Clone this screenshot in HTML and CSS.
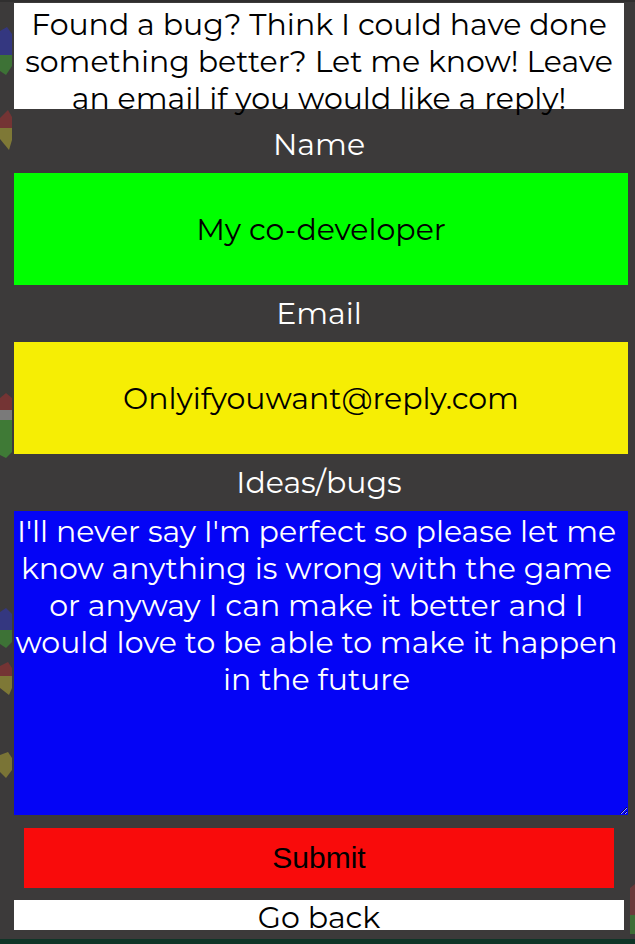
FILE: index.html
```html
<!DOCTYPE html>
<html lang="en">
<head>
<meta charset="utf-8">
<title>Feedback</title>
<link rel="stylesheet" href="styles.css">
</head>
<body>
<div class="panel">
  <svg class="decor decor-left" width="14" height="939" viewBox="0 0 14 939" aria-hidden="true">
    <polygon points="0,31 7,27 12,34 12,55 0,55" fill="#343780"/>
    <polygon points="0,55 12,55 12,66 6,75 0,71" fill="#3d7236"/>
    <polygon points="0,118 8,110 12,117 12,128 0,128" fill="#743434"/>
    <polygon points="0,128 12,128 12,140 9,150 0,139" fill="#7e7836"/>
    <polygon points="0,398 6,393 12,398 12,410 0,410" fill="#743434"/>
    <polygon points="0,410 12,410 12,420 0,420" fill="#7a7a7a"/>
    <polygon points="0,420 12,420 12,452 6,458 0,455" fill="#3f7a36"/>
    <polygon points="0,612 6,608 12,614 12,630 0,630" fill="#343780"/>
    <polygon points="0,630 12,630 12,642 6,648 0,644" fill="#3d7236"/>
    <polygon points="0,666 8,662 12,668 12,676 0,676" fill="#743434"/>
    <polygon points="0,676 12,676 12,688 9,695 0,688" fill="#7e7836"/>
    <polygon points="0,755 8,752 12,758 12,770 6,778 0,772" fill="#7a7436"/>
  </svg>
  <svg class="decor decor-right" width="7" height="939" viewBox="0 0 7 939" aria-hidden="true">
    <polygon points="2,888 7,884 7,915 2,915" fill="#6a3a3a"/>
    <polygon points="2,915 7,915 7,934 2,934" fill="#3d6e36"/>
  </svg>

  <div class="intro">Found a bug? Think I could have done something better? Let me know! Leave an email if you would like a reply!</div>

  <label class="label" for="name">Name</label>
  <input class="field field-green" id="name" type="text" value="My co-developer">

  <label class="label" for="email">Email</label>
  <input class="field field-yellow" id="email" type="text" value="Onlyifyouwant@reply.com">

  <label class="label" for="ideas">Ideas/bugs</label>
  <textarea class="ideas" id="ideas">I'll never say I'm perfect so please let me know anything is wrong with the game or anyway I can make it better and I would love to be able to make it happen in the future</textarea>

  <button class="submit" type="button">Submit</button>
  <button class="back" type="button">Go back</button>
</div>
</body>
</html>
```
FILE: styles.css
```css
html, body {
  margin: 0;
  padding: 0;
}

body {
  background: #0f3527;
  width: 635px;
  height: 944px;
  overflow: hidden;
  font-family: "Montserrat", "Open Sans", "DejaVu Sans", sans-serif;
}

.panel {
  position: relative;
  box-sizing: border-box;
  height: 939px;
  background: #3c3a3a;
  border-top: 2px solid #302f2f;
  padding: 1px 0 0 14px;
  display: flex;
  flex-direction: column;
  align-items: flex-start;
}

.decor {
  position: absolute;
  top: -2px;
  pointer-events: none;
}

.decor-left { left: 0; }
.decor-right { right: 0; }

.intro {
  box-sizing: border-box;
  width: 610px;
  height: 106px;
  background: #ffffff;
  color: #000000;
  font-size: 30px;
  line-height: 37px;
  text-align: center;
  padding-top: 3px;
  margin-bottom: 7px;
}

.label {
  width: 610px;
  height: 57px;
  display: flex;
  align-items: center;
  justify-content: center;
  color: #ffffff;
  font-size: 30px;
}

.field {
  box-sizing: border-box;
  width: 614px;
  height: 112px;
  margin: 0;
  border: none;
  outline: none;
  padding: 0;
  text-align: center;
  font-family: inherit;
  font-size: 30px;
  color: #000000;
}

.field-green { background: #00ff00; }
.field-yellow { background: #f6ee04; }

.ideas {
  box-sizing: border-box;
  display: block;
  width: 614px;
  height: 304px;
  margin: 0;
  border: none;
  outline: none;
  padding: 2px 9px 2px 0;
  background: #0404f6;
  color: #ffffff;
  font-family: inherit;
  font-size: 30px;
  line-height: 37px;
  text-align: center;
}

.submit {
  box-sizing: border-box;
  width: 590px;
  height: 60px;
  margin: 13px 0 0 10px;
  border: none;
  padding: 0;
  background: #f90b0b;
  color: #000000;
  font-family: "Liberation Sans", Arial, sans-serif;
  font-size: 30px;
}

.back {
  box-sizing: border-box;
  width: 610px;
  height: 30px;
  margin-top: 12px;
  border: none;
  padding: 3px 0 0;
  background: #ffffff;
  color: #000000;
  font-family: inherit;
  font-size: 30px;
  line-height: 30px;
  overflow: hidden;
  display: flex;
  justify-content: center;
  align-items: flex-start;
}
```
